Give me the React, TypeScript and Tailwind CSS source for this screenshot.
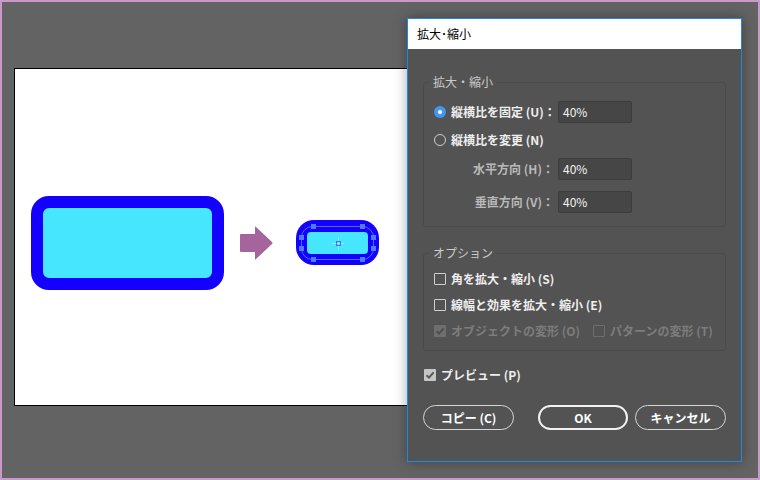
import React from "react";

const font = { fontFamily: '"Noto Sans CJK JP", "Noto Sans", sans-serif' };

const Check = ({ color }: { color: string }) => (
  <svg width="12" height="12" viewBox="0 0 12 12">
    <path d="M2.5 6.2 L5 8.6 L9.6 3.4" fill="none" stroke={color} strokeWidth="2" />
  </svg>
);

const Box = ({ checked, tone }: { checked?: boolean; tone?: "on" | "off" }) => {
  if (!checked) {
    return <span className="w-[12px] h-[12px] border border-[#cfcfcf] rounded-[1px] shrink-0" />;
  }
  return tone === "off" ? (
    <span className="w-[12px] h-[12px] bg-[#6f6f6f] rounded-[1px] shrink-0 flex">
      <Check color="#4e4e4e" />
    </span>
  ) : (
    <span className="w-[12px] h-[12px] bg-[#c6c6c6] rounded-[1px] shrink-0 flex">
      <Check color="#595959" />
    </span>
  );
};

const Radio = ({ on }: { on?: boolean }) =>
  on ? (
    <span className="w-[12px] h-[12px] rounded-full bg-[#4196f0] flex items-center justify-center shrink-0">
      <span className="w-[4px] h-[4px] rounded-full bg-white" />
    </span>
  ) : (
    <span className="w-[12px] h-[12px] rounded-full border-[1.5px] border-[#cfcfcf] shrink-0" />
  );

const Field = ({ value }: { value: string }) => (
  <div className="w-[74px] h-[22px] bg-[#464646] border border-[#3d3d3d] rounded-[2px] flex items-center pl-[4px] text-[12px] text-[#f2f2f2]">
    {value}
  </div>
);

export default function App() {
  return (
    <div
      className="relative w-[760px] h-[480px] border-2 border-[#c99ac9] bg-[#636363] overflow-hidden"
      style={font}
    >
      {/* artboard */}
      <div className="ml-[12px] mt-[66px] w-[460px] h-[338px] border border-black bg-white flex items-center pl-[16px] pt-[11px]">
        <div className="w-[193px] h-[94px] border-[12px] border-[#1400ff] rounded-[18px] bg-[#46e6ff]" />
        <svg className="ml-[16px]" width="33" height="34" viewBox="0 0 33 34">
          <path
            d="M1 8 H15 V1 Q15 0 16 1 L32 16 Q33 17 32 18 L16 33 Q15 34 15 33 V26 H1 Q0 26 0 25 V9 Q0 8 1 8 Z"
            fill="#a5649b"
          />
        </svg>
        <svg className="ml-[23px]" width="84" height="46" viewBox="0 0 84 46">
          <rect x="0" y="0" width="83" height="45" rx="18" fill="#1400ff" />
          <rect x="11" y="12" width="61" height="22" rx="4" fill="#46e6ff" />
          <rect x="5.5" y="6.5" width="72" height="33" rx="11" fill="none" stroke="#4f6bff" strokeWidth="1" />
          {[
            [17, 6],
            [66, 6],
            [17, 39],
            [66, 39],
            [5, 17],
            [5, 28],
            [77, 17],
            [77, 28],
          ].map(([x, y], i) => (
            <rect key={i} x={x - 2} y={y - 2} width="5" height="5" fill="#4f7cff" />
          ))}
          <line x1="36" y1="23.5" x2="48" y2="23.5" stroke="#7ff0ff" strokeWidth="1" />
          <line x1="42.5" y1="17" x2="42.5" y2="30" stroke="#7ff0ff" strokeWidth="1" />
          <rect x="40.5" y="21.5" width="4" height="4" fill="none" stroke="#4f6bff" strokeWidth="1" />
        </svg>
      </div>

      {/* dialog */}
      <div className="absolute left-[405px] top-[16px] w-[335px] h-[444px] border border-[#1e88e5] bg-[#535353] shadow-[0_0_12px_rgba(0,0,0,0.35)] flex flex-col">
        <div className="h-[30px] bg-white flex items-center pl-[9px] text-[12px] text-black">拡大･縮小</div>
        <div className="px-[15px] pt-[25px] flex flex-col">
          <fieldset className="border border-[#4a4a4a] rounded-[3px] pl-[10px] pt-[11px] pb-[13px]">
            <legend className="-ml-[4px] px-[3px] text-[12px] leading-[16px] text-[#cacaca]">拡大・縮小</legend>
            <div className="flex items-center h-[22px]">
              <div className="w-[124px] flex items-center gap-[5px] text-[12px] font-bold text-[#eeeeee]">
                <Radio on />
                <span>縦横比を固定 (U)：</span>
              </div>
              <Field value="40%" />
            </div>
            <div className="flex items-center h-[22px] mt-[6px]">
              <div className="flex items-center gap-[5px] text-[12px] font-bold text-[#eeeeee]">
                <Radio />
                <span>縦横比を変更 (N)</span>
              </div>
            </div>
            <div className="flex items-center h-[22px] mt-[7px]">
              <div className="w-[124px] pr-[4px] text-right text-[12px] font-bold text-[#b9b9b9]">水平方向 (H)：</div>
              <Field value="40%" />
            </div>
            <div className="flex items-center h-[22px] mt-[11px]">
              <div className="w-[124px] pr-[4px] text-right text-[12px] font-bold text-[#b9b9b9]">垂直方向 (V)：</div>
              <Field value="40%" />
            </div>
          </fieldset>

          <fieldset className="mt-[18px] border border-[#4a4a4a] rounded-[3px] pl-[10px] pt-[8px] pb-[9px]">
            <legend className="-ml-[4px] px-[3px] text-[12px] leading-[16px] text-[#cacaca]">オプション</legend>
            <div className="flex items-center h-[20px] gap-[5px] text-[12px] font-bold text-[#eeeeee]">
              <Box />
              <span>角を拡大・縮小 (S)</span>
            </div>
            <div className="flex items-center h-[20px] mt-[6px] gap-[5px] text-[12px] font-bold text-[#eeeeee]">
              <Box />
              <span>線幅と効果を拡大・縮小 (E)</span>
            </div>
            <div className="flex items-center h-[20px] mt-[6px] text-[12px] font-bold text-[#7d7d7d]">
              <Box checked tone="off" />
              <span className="ml-[5px]">オブジェクトの変形 (O)</span>
              <span className="ml-[13px] w-[12px] h-[12px] border border-[#6e6e6e] rounded-[1px]" />
              <span className="ml-[5px]">パターンの変形 (T)</span>
            </div>
          </fieldset>

          <div className="flex items-center h-[20px] mt-[14px] pl-[1px] gap-[5px] text-[12px] font-bold text-[#eeeeee]">
            <Box checked tone="on" />
            <span>プレビュー (P)</span>
          </div>

          <div className="flex mt-[20px] text-[12px] font-bold text-white">
            <button className="w-[91px] h-[25px] rounded-full border border-[#d6d6d6]">コピー (C)</button>
            <button className="ml-[24px] w-[90px] h-[25px] rounded-full border-2 border-[#f2f2f2]">OK</button>
            <button className="ml-[7px] w-[91px] h-[25px] rounded-full border border-[#d6d6d6]">キャンセル</button>
          </div>
        </div>
      </div>
    </div>
  );
}
